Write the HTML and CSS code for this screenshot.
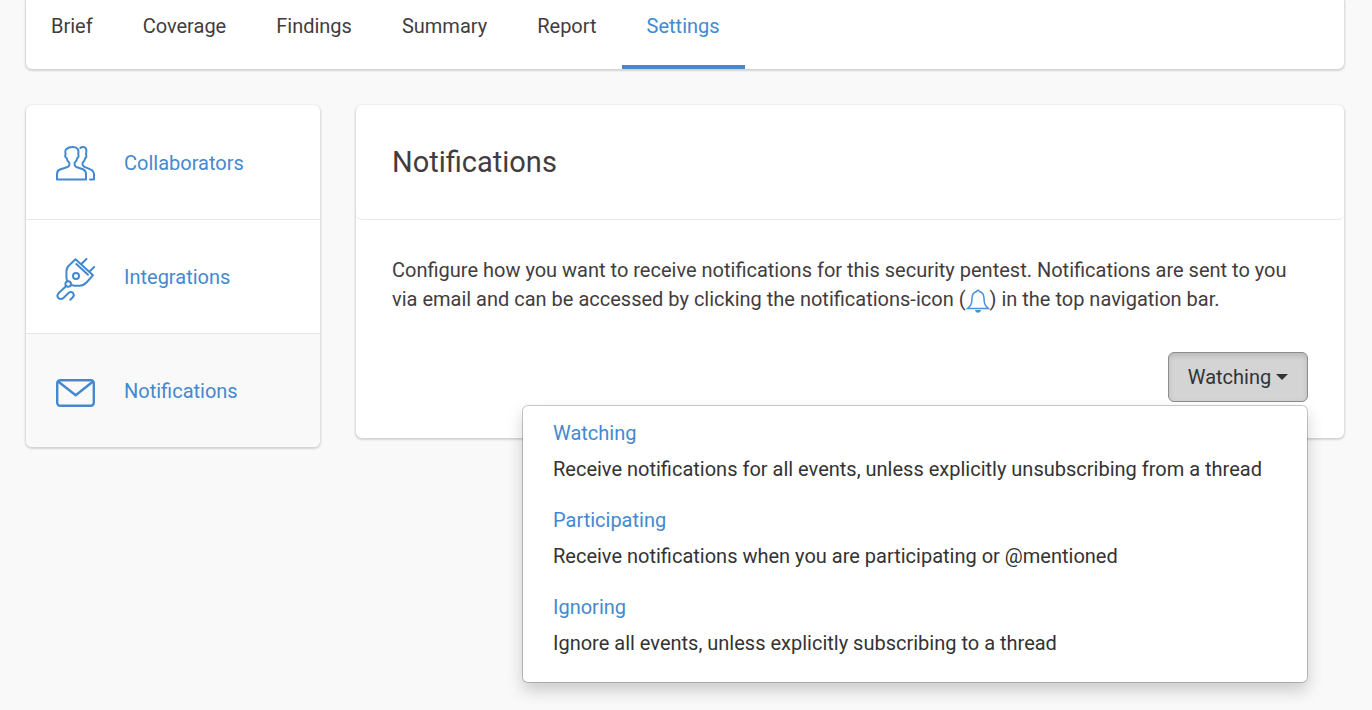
FILE: index.html
```html
<!DOCTYPE html>
<html lang="en">
<head>
<meta charset="utf-8">
<meta name="viewport" content="width=device-width, initial-scale=1">
<title>Settings – Notifications</title>
<link rel="stylesheet" href="styles.css">
</head>
<body>
<nav class="card tabs" aria-label="Pentest">
  <a class="tab" href="#brief">Brief</a>
  <a class="tab" href="#coverage">Coverage</a>
  <a class="tab" href="#findings">Findings</a>
  <a class="tab" href="#summary">Summary</a>
  <a class="tab" href="#report">Report</a>
  <a class="tab tab-active" href="#settings" aria-current="page">Settings</a>
</nav>
<div class="layout">
  <nav class="card side" aria-label="Settings">
    <a class="side-item" href="#collaborators">
      <svg class="side-icon" viewBox="0 0 40 46" aria-hidden="true">
        <path d="M1 39.500V34.500Q1 30.500 4 29.500L11.500 27Q13.300 26.300 13.300 24.800V22.800C11.500 21.500 10.900 20 10.700 18.200C9.200 17.500 8.700 15.500 9.600 14.500C9.200 12 9 9.500 10.600 9C12 7.500 14 7 16.500 7C19 7 20.500 7.500 21.400 8.800C22.600 9.800 22.700 12 22.200 14.500C23 15.500 22.600 17.500 21.200 18.200C21 20 20.300 21.500 18.700 22.800V24.800Q18.700 26.300 20.300 27L27 29.300Q30 30.500 30 34.500V39.500Z"/>
        <path d="M24.300 8C25 7.200 25.800 7 27 7C29.600 7 30.800 9 30.300 12L30 14.500C30.800 15.500 30.400 17.500 29.200 18.200C29 20 28.200 21.500 26.600 22.800V24.300Q26.600 25.800 28 26.700L34.300 29.300Q38 31 38 34.500V39.500H34"/>
      </svg>
      <span>Collaborators</span>
    </a>
    <a class="side-item" href="#integrations">
      <svg class="side-icon" viewBox="0 0 40 46" aria-hidden="true">
        <path d="M19.500 4.300L37 20.200L30.500 27.500Q27.500 30.700 23.500 30.700H18.500C14.500 30.500 10.400 27 10.400 22.500V16C10.400 13 11.700 11.500 13.500 9.900Z"/>
        <path d="M20.300 9L32 19.700M25.300 9L30.500 4M33.500 16.500L38.200 12"/>
        <circle cx="20" cy="21" r="3"/>
        <circle class="socket" cx="12.200" cy="29" r="2.800"/>
        <path d="M10 31.200L3 37.700Q.200 40.500 2.300 43Q5 45.300 7.700 42.700L12.500 38Q15 36 17 38Q18.800 40.300 16.800 42.300L14.300 44.700"/>
      </svg>
      <span>Integrations</span>
    </a>
    <a class="side-item side-active" href="#notifications" aria-current="page">
      <svg class="side-icon side-icon-bold" viewBox="0 0 40 46" aria-hidden="true">
        <rect x="1.200" y="11.200" width="36.600" height="25.600" rx="3"/>
        <path d="M2.200 12.500L19.700 26.300 37 12.500"/>
      </svg>
      <span>Notifications</span>
    </a>
  </nav>
  <main class="card panel">
    <header class="panel-head"><h1 class="panel-title">Notifications</h1></header>
    <div class="panel-body">
      <p class="intro">Configure how you want to receive notifications for this security pentest. Notifications are sent to you via email and can be accessed by clicking the notifications-icon (<svg class="bell" viewBox="0 0 24 24" aria-hidden="true"><path d="M12 1.200q-1.200 0-1.400 1.300Q6.200 3.800 6 9q0 6-2.200 8.200L1.700 19.400h20.600l-2.100-2.200Q18 15 18 9q-.2-5.200-4.600-6.500Q13.200 1.200 12 1.200z"/><path class="bell-clapper" d="M9 21h6q-.5 2.800-3 2.800T9 21z"/></svg>) in the top navigation bar.</p>
      <div class="actions">
        <div class="dropdown">
          <button class="toggle" type="button" aria-haspopup="true" aria-expanded="true">Watching<span class="caret"></span></button>
          <ul class="menu">
            <li><a class="option" href="#watching"><span class="option-name">Watching</span><span>Receive notifications for all events, unless explicitly unsubscribing from a thread</span></a></li>
            <li><a class="option" href="#participating"><span class="option-name">Participating</span><span>Receive notifications when you are participating or @mentioned</span></a></li>
            <li><a class="option" href="#ignoring"><span class="option-name">Ignoring</span><span>Ignore all events, unless explicitly subscribing to a thread</span></a></li>
          </ul>
        </div>
      </div>
    </div>
  </main>
</div>
</body>
</html>
```
FILE: styles.css
```css
* { box-sizing: border-box; }

body {
  min-height: 100vh;
  margin: 0;
  padding: 0 28px 0 26px;
  background: #f9f9f9;
  color: #433c3e;
  font: 20px/29px Roboto, "Liberation Sans", sans-serif;
}

a { color: #4489d0; text-decoration: none; }

.card {
  background: #fff;
  border-radius: 6px;
  box-shadow: 0 1px 2px 1px rgba(0, 0, 0, 0.15);
}

.tabs {
  display: flex;
  border-radius: 0 0 6px 6px;
}

.tab {
  padding: 12px 25px 24px;
  border-bottom: 4px solid transparent;
  color: #433c3e;
}

.tab-active { border-bottom-color: #4489d0; color: #4489d0; }

.layout {
  display: grid;
  grid-template-columns: 294px 1fr;
  align-items: start;
  gap: 36px;
  margin-top: 36px;
}

.side { overflow: hidden; }

.side-item {
  display: flex;
  align-items: center;
  gap: 28px;
  height: 114px;
  padding: 2px 30px 0;
}

.side-item + .side-item { border-top: 1px solid #e6e6e6; }
.side-active { background: #f9f9f9; }

.side-icon {
  width: 40px;
  height: 46px;
  overflow: visible;
  fill: none;
  stroke: #4489d0;
  stroke-width: 2;
  stroke-linecap: round;
  stroke-linejoin: round;
}

.side-icon-bold { stroke-width: 2.4; }
.socket { fill: #fff; }

.panel-head {
  display: flex;
  align-items: center;
  height: 115px;
  padding: 0 36px;
  border-bottom: 1px solid #e8e8e8;
  border-radius: 6px;
}

.panel-title {
  margin: 0;
  font-size: 29px;
  font-weight: 400;
  line-height: 36px;
}

.panel-body { padding: 36px; }
.intro { margin: 0 0 38px; }

.bell {
  width: 24px;
  height: 24px;
  vertical-align: -7px;
  fill: none;
  stroke: #4a90d9;
  stroke-width: 1.5;
}

.bell-clapper { fill: #4a90d9; stroke: none; }

.actions { display: flex; justify-content: flex-end; }
.dropdown { position: relative; }

.toggle {
  display: flex;
  align-items: center;
  justify-content: center;
  gap: 5px;
  min-width: 140px;
  height: 50px;
  padding: 0 18px;
  border: 1px solid #8c8c8c;
  border-radius: 6px;
  background: #d4d4d4;
  box-shadow: inset 0 3px 5px rgba(0, 0, 0, 0.125);
  color: #333;
  font: inherit;
}

.caret {
  border: 6px solid transparent;
  border-top-color: #333;
  border-bottom: 0;
}

.menu {
  position: absolute;
  top: 100%;
  right: 0;
  width: max-content;
  min-width: 786px;
  margin: 3px 0 0;
  padding: 6px 0 9px;
  border: 1px solid rgba(0, 0, 0, 0.2);
  border-radius: 6px;
  background: #fff;
  background-clip: padding-box;
  box-shadow: 0 8px 16px rgba(0, 0, 0, 0.175);
  list-style: none;
}

.option {
  display: flex;
  flex-direction: column;
  gap: 7px;
  padding: 7px 30px 15px;
  color: #333;
}

.option-name { color: #4489d0; }
```
